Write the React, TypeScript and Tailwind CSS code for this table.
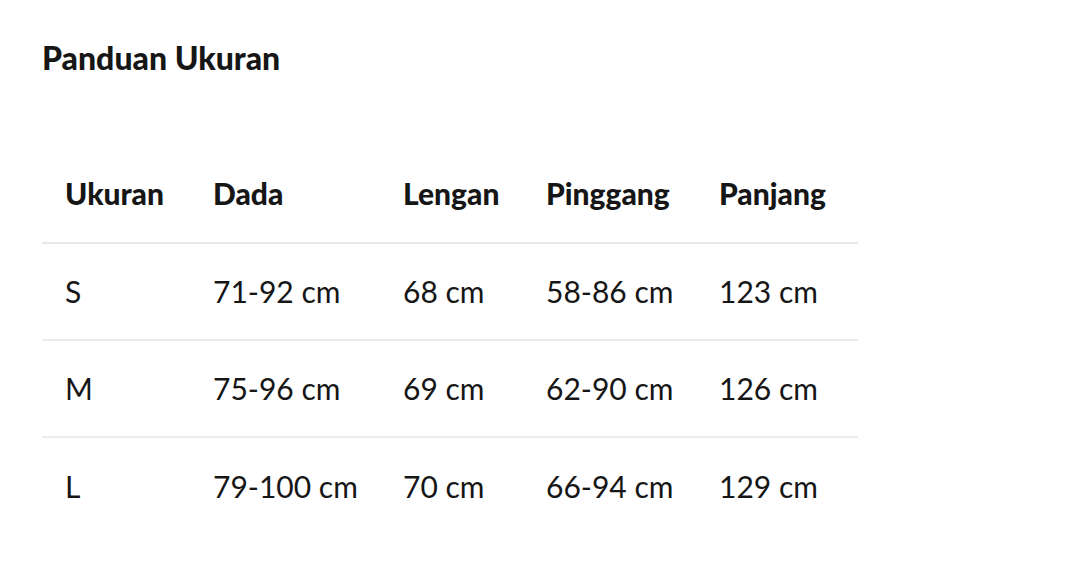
const headers = ['Ukuran', 'Dada', 'Lengan', 'Pinggang', 'Panjang']

const rows = [
  ['S', '71-92 cm', '68 cm', '58-86 cm', '123 cm'],
  ['M', '75-96 cm', '69 cm', '62-90 cm', '126 cm'],
  ['L', '79-100 cm', '70 cm', '66-94 cm', '129 cm'],
]

const colWidths = ['w-[148px]', 'w-[190px]', 'w-[143px]', 'w-[173px]', 'w-[162px]']

export default function App() {
  return (
    <div className="w-[1080px] h-[573px] bg-white text-[#161616] pl-[42px] pt-[40px] font-['Lato','Liberation_Sans',sans-serif]">
      <h1 className="text-[32px] leading-[36px] font-black">Panduan Ukuran</h1>

      <table className="mt-[68px] w-[816px] table-fixed border-collapse">
        <colgroup>
          {colWidths.map((w, i) => (
            <col key={i} className={w} />
          ))}
        </colgroup>
        <thead>
          <tr className="h-[99px] border-b-2 border-[#e8e8e8]">
            {headers.map(h => (
              <th key={h} className="pl-[23px] text-left text-[30px] font-black whitespace-nowrap">
                {h}
              </th>
            ))}
          </tr>
        </thead>
        <tbody>
          {rows.map((r, ri) => (
            <tr
              key={r[0]}
              className={ri < rows.length - 1 ? 'h-[97px] border-b-2 border-[#ececec]' : 'h-[97px]'}
            >
              {r.map((c, ci) => (
                <td key={ci} className="pl-[23px] text-[30px] whitespace-nowrap">
                  {c}
                </td>
              ))}
            </tr>
          ))}
        </tbody>
      </table>
    </div>
  )
}
